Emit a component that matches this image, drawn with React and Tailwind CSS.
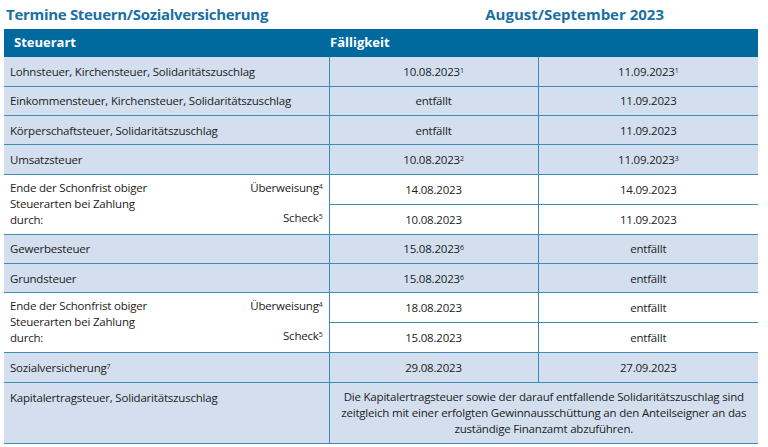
import React from "react";

const font = { fontFamily: '"Open Sans", "Noto Sans", sans-serif' };

const rows = [
  { type: "row", label: "Lohnsteuer, Kirchensteuer, Solidaritätszuschlag", a: "10.08.2023", as: "1", b: "11.09.2023", bs: "1" },
  { type: "row", label: "Einkommensteuer, Kirchensteuer, Solidaritätszuschlag", a: "entfällt", b: "11.09.2023" },
  { type: "row", label: "Körperschaftsteuer, Solidaritätszuschlag", a: "entfällt", b: "11.09.2023" },
  { type: "row", label: "Umsatzsteuer", a: "10.08.2023", as: "2", b: "11.09.2023", bs: "3" },
  { type: "frist", ua: "14.08.2023", ub: "14.09.2023", sa: "10.08.2023", sb: "11.09.2023" },
  { type: "row", label: "Gewerbesteuer", a: "15.08.2023", as: "6", b: "entfällt" },
  { type: "row", label: "Grundsteuer", a: "15.08.2023", as: "6", b: "entfällt" },
  { type: "frist", ua: "18.08.2023", ub: "entfällt", sa: "15.08.2023", sb: "entfällt" },
  { type: "row", label: "Sozialversicherung", ls: "7", a: "29.08.2023", b: "27.09.2023" },
];

function Sup({ n }) {
  if (!n) return null;
  return <sup className="relative -top-[3px] text-[7px]">{n}</sup>;
}

const line = "border-b border-[#3f8bb8]";
const vline = "border-l border-[#3f8bb8]";

export default function App() {
  return (
    <div className="h-[447px] w-[768px] overflow-hidden bg-white text-[11.5px] tracking-[-0.2px] text-[#222]" style={font}>
      <div className="flex h-[29px] items-center justify-between pl-[6px] pr-[104px] text-[15px] font-bold text-[#1b6fa3]">
        <span className="tracking-[-0.3px]">Termine Steuern/Sozialversicherung</span>
        <span className="tracking-normal">August/September 2023</span>
      </div>
      <table className="ml-[4px] w-[754px] table-fixed border-collapse">
        <colgroup>
          <col className="w-[325px]" />
          <col className="w-[209px]" />
          <col className="w-[220px]" />
        </colgroup>
        <thead>
          <tr className="h-[28px] bg-[#006a9f] text-[13px] font-bold tracking-normal text-white">
            <th className="pl-[10px] text-left">Steuerart</th>
            <th className="pl-[1px] text-left" colSpan={2}>Fälligkeit</th>
          </tr>
        </thead>
        <tbody>
          {rows.map((r, i) =>
            r.type === "row" ? (
              <tr key={i} className={`h-[29.3px] bg-[#d3dfee] ${line}`}>
                <td className="pl-[6px]">
                  {r.label}
                  <Sup n={r.ls} />
                </td>
                <td className={`text-center ${vline}`}>
                  {r.a}
                  <Sup n={r.as} />
                </td>
                <td className={`text-center ${vline}`}>
                  {r.b}
                  <Sup n={r.bs} />
                </td>
              </tr>
            ) : (
              <React.Fragment key={i}>
                <tr className={`h-[30px] bg-white ${line}`}>
                  <td rowSpan={2} className={`bg-white pl-[6px] pr-[6px] align-top ${line}`}>
                    <div className="flex h-[59px] justify-between pt-[5px] leading-[16px]">
                      <span className="w-[150px]">Ende der Schonfrist obiger Steuerarten bei Zahlung durch:</span>
                      <div className="flex flex-col items-end justify-between pb-[8px]">
                        <span>
                          Überweisung
                          <Sup n="4" />
                        </span>
                        <span>
                          Scheck
                          <Sup n="5" />
                        </span>
                      </div>
                    </div>
                  </td>
                  <td className={`text-center ${vline}`}>{r.ua}</td>
                  <td className={`text-center ${vline}`}>{r.ub}</td>
                </tr>
                <tr className={`h-[30px] bg-white ${line}`}>
                  <td className={`text-center ${vline}`}>{r.sa}</td>
                  <td className={`text-center ${vline}`}>{r.sb}</td>
                </tr>
              </React.Fragment>
            )
          )}
          <tr className={`h-[61px] bg-[#d3dfee] ${line}`}>
            <td className="pl-[6px] pt-[6px] align-top">Kapitalertragsteuer, Solidaritätszuschlag</td>
            <td colSpan={2} className={`px-[4px] text-center leading-[16px] ${vline}`}>
              Die Kapitalertragsteuer sowie der darauf entfallende Solidaritätszuschlag sind zeitgleich mit einer erfolgten Gewinnausschüttung an den Anteilseigner an das zuständige Finanzamt abzuführen.
            </td>
          </tr>
        </tbody>
      </table>
    </div>
  );
}
